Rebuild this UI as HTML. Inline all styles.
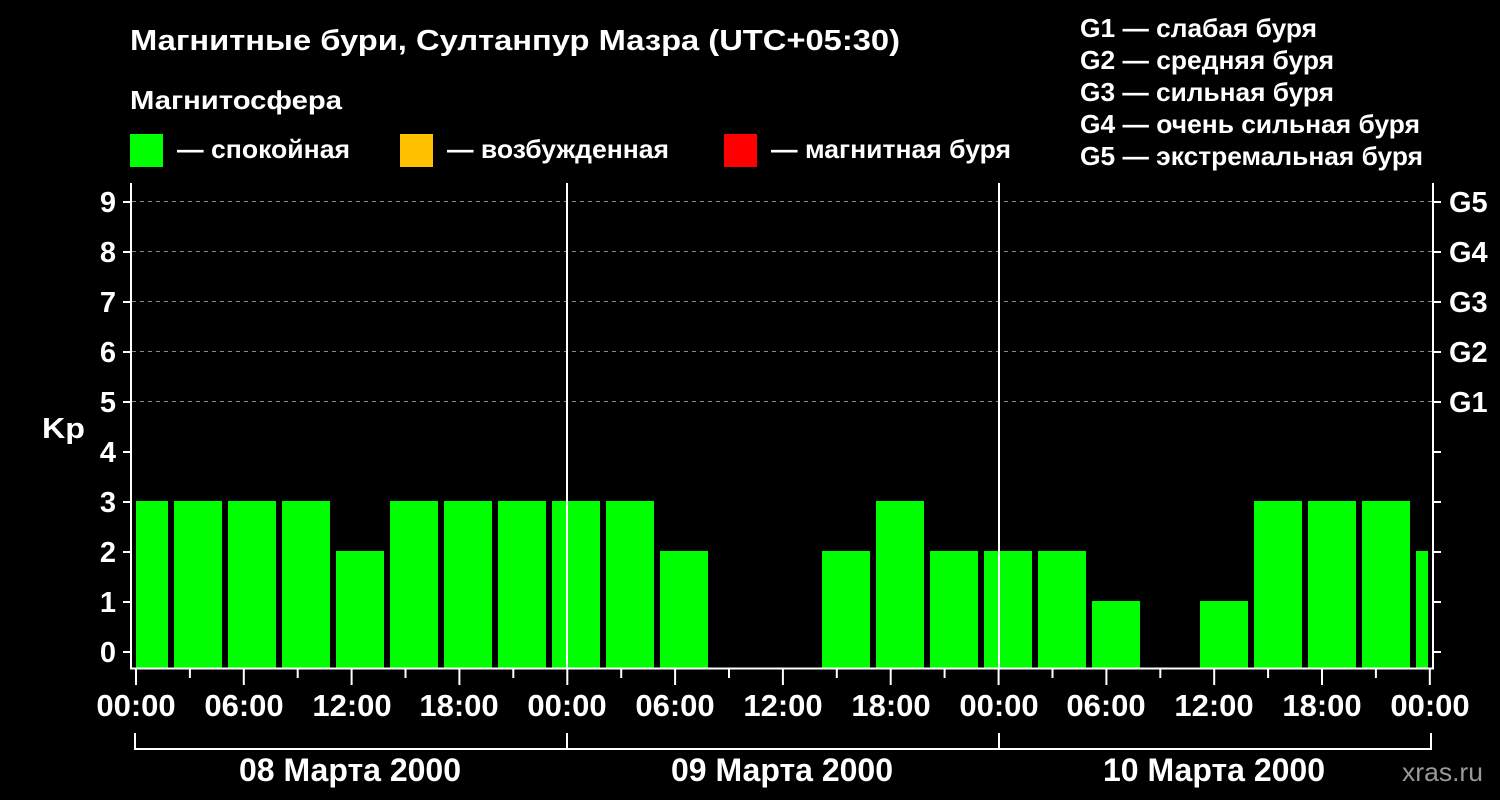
<!DOCTYPE html>
<html><head><meta charset="utf-8"><style>
body{margin:0;background:#000;width:1500px;height:800px;overflow:hidden}
svg{display:block}
text{font-family:"Liberation Sans",sans-serif;font-weight:bold;fill:#fff}
</style></head><body>
<svg width="1500" height="800" xmlns="http://www.w3.org/2000/svg">
<text x="130" y="50" font-size="29" textLength="770" lengthAdjust="spacingAndGlyphs">Магнитные бури, Султанпур Мазра (UTC+05:30)</text>
<text x="130" y="109" font-size="26" textLength="212" lengthAdjust="spacingAndGlyphs">Магнитосфера</text>
<rect x="130" y="134" width="33" height="33" fill="#00ff00"/>
<text x="177" y="158" font-size="26" textLength="173" lengthAdjust="spacingAndGlyphs">— спокойная</text>
<rect x="400" y="134" width="33" height="33" fill="#ffc000"/>
<text x="447" y="158" font-size="26" textLength="222" lengthAdjust="spacingAndGlyphs">— возбужденная</text>
<rect x="724" y="134" width="33" height="33" fill="#ff0000"/>
<text x="771" y="158" font-size="26" textLength="240" lengthAdjust="spacingAndGlyphs">— магнитная буря</text>
<g font-size="26">
<text x="1080" y="37" textLength="237" lengthAdjust="spacingAndGlyphs">G1 — слабая буря</text>
<text x="1080" y="69" textLength="254" lengthAdjust="spacingAndGlyphs">G2 — средняя буря</text>
<text x="1080" y="101" textLength="254" lengthAdjust="spacingAndGlyphs">G3 — сильная буря</text>
<text x="1080" y="133" textLength="340" lengthAdjust="spacingAndGlyphs">G4 — очень сильная буря</text>
<text x="1080" y="165" textLength="343" lengthAdjust="spacingAndGlyphs">G5 — экстремальная буря</text>
</g>
<g stroke="#888" stroke-dasharray="4,4" stroke-width="1">
<line x1="132" x2="1432" y1="201.5" y2="201.5"/><line x1="132" x2="1432" y1="251.5" y2="251.5"/>
<line x1="132" x2="1432" y1="301.5" y2="301.5"/><line x1="132" x2="1432" y1="351.5" y2="351.5"/>
<line x1="132" x2="1432" y1="401.5" y2="401.5"/>
</g>
<g fill="#00ff00">
<rect x="136" y="501" width="32" height="167"/>
<rect x="174" y="501" width="48" height="167"/>
<rect x="228" y="501" width="48" height="167"/>
<rect x="282" y="501" width="48" height="167"/>
<rect x="336" y="551" width="48" height="117"/>
<rect x="390" y="501" width="48" height="167"/>
<rect x="444" y="501" width="48" height="167"/>
<rect x="498" y="501" width="48" height="167"/>
<rect x="552" y="501" width="48" height="167"/>
<rect x="606" y="501" width="48" height="167"/>
<rect x="660" y="551" width="48" height="117"/>
<rect x="822" y="551" width="48" height="117"/>
<rect x="876" y="501" width="48" height="167"/>
<rect x="930" y="551" width="48" height="117"/>
<rect x="984" y="551" width="48" height="117"/>
<rect x="1038" y="551" width="48" height="117"/>
<rect x="1092" y="601" width="48" height="67"/>
<rect x="1200" y="601" width="48" height="67"/>
<rect x="1254" y="501" width="48" height="167"/>
<rect x="1308" y="501" width="48" height="167"/>
<rect x="1362" y="501" width="48" height="167"/>
<rect x="1416" y="551" width="12" height="117"/>
</g>
<g stroke="#fff" stroke-width="2" fill="none">
<polyline points="131,183 131,668.5 1433,668.5 1433,183"/>
<line x1="567" x2="567" y1="183" y2="668"/>
<line x1="999" x2="999" y1="183" y2="668"/>
<polyline points="135,733 135,749 1431,749 1431,733"/>
<line x1="567" x2="567" y1="733" y2="749"/><line x1="999" x2="999" y1="733" y2="749"/>
</g>
<g stroke="#fff" stroke-width="2">
<line x1="123" x2="131" y1="652" y2="652"/><line x1="123" x2="131" y1="602" y2="602"/>
<line x1="123" x2="131" y1="552" y2="552"/><line x1="123" x2="131" y1="502" y2="502"/>
<line x1="123" x2="131" y1="452" y2="452"/><line x1="123" x2="131" y1="402" y2="402"/>
<line x1="123" x2="131" y1="352" y2="352"/><line x1="123" x2="131" y1="302" y2="302"/>
<line x1="123" x2="131" y1="252" y2="252"/><line x1="123" x2="131" y1="202" y2="202"/>
<line x1="1433" x2="1441" y1="652" y2="652"/><line x1="1433" x2="1441" y1="602" y2="602"/>
<line x1="1433" x2="1441" y1="552" y2="552"/><line x1="1433" x2="1441" y1="502" y2="502"/>
<line x1="1433" x2="1441" y1="452" y2="452"/><line x1="1433" x2="1441" y1="402" y2="402"/>
<line x1="1433" x2="1441" y1="352" y2="352"/><line x1="1433" x2="1441" y1="302" y2="302"/>
<line x1="1433" x2="1441" y1="252" y2="252"/><line x1="1433" x2="1441" y1="202" y2="202"/>
</g>
<g font-size="29" text-anchor="end">
<text x="116" y="662">0</text><text x="116" y="612">1</text><text x="116" y="562">2</text>
<text x="116" y="512">3</text><text x="116" y="462">4</text><text x="116" y="412">5</text>
<text x="116" y="362">6</text><text x="116" y="312">7</text><text x="116" y="262">8</text>
<text x="116" y="212">9</text>
</g>
<text x="42" y="438" font-size="29" textLength="43" lengthAdjust="spacingAndGlyphs">Kp</text>
<g font-size="29">
<text x="1449" y="412">G1</text><text x="1449" y="362">G2</text><text x="1449" y="312">G3</text>
<text x="1449" y="262">G4</text><text x="1449" y="212">G5</text>
</g>
<g stroke="#fff" stroke-width="2">
<line x1="136" x2="136" y1="669" y2="685"/><line x1="189.9" x2="189.9" y1="669" y2="678"/>
<line x1="243.8" x2="243.8" y1="669" y2="685"/><line x1="297.7" x2="297.7" y1="669" y2="678"/>
<line x1="351.6" x2="351.6" y1="669" y2="685"/><line x1="405.5" x2="405.5" y1="669" y2="678"/>
<line x1="459.4" x2="459.4" y1="669" y2="685"/><line x1="513.3" x2="513.3" y1="669" y2="678"/>
<line x1="567.3" x2="567.3" y1="669" y2="685"/><line x1="621.2" x2="621.2" y1="669" y2="678"/>
<line x1="675.1" x2="675.1" y1="669" y2="685"/><line x1="729" x2="729" y1="669" y2="678"/>
<line x1="782.9" x2="782.9" y1="669" y2="685"/><line x1="836.8" x2="836.8" y1="669" y2="678"/>
<line x1="890.7" x2="890.7" y1="669" y2="685"/><line x1="944.6" x2="944.6" y1="669" y2="678"/>
<line x1="998.6" x2="998.6" y1="669" y2="685"/><line x1="1052.5" x2="1052.5" y1="669" y2="678"/>
<line x1="1106.4" x2="1106.4" y1="669" y2="685"/><line x1="1160.3" x2="1160.3" y1="669" y2="678"/>
<line x1="1214.2" x2="1214.2" y1="669" y2="685"/><line x1="1268.1" x2="1268.1" y1="669" y2="678"/>
<line x1="1322" x2="1322" y1="669" y2="685"/><line x1="1375.9" x2="1375.9" y1="669" y2="678"/>
<line x1="1429.8" x2="1429.8" y1="669" y2="685"/>
</g>
<g font-size="31" text-anchor="middle">
<text x="136" y="716">00:00</text><text x="244" y="716">06:00</text><text x="352" y="716">12:00</text>
<text x="459" y="716">18:00</text><text x="567" y="716">00:00</text><text x="675" y="716">06:00</text>
<text x="783" y="716">12:00</text><text x="891" y="716">18:00</text><text x="999" y="716">00:00</text>
<text x="1106" y="716">06:00</text><text x="1214" y="716">12:00</text><text x="1322" y="716">18:00</text>
<text x="1430" y="716">00:00</text>
<text x="350" y="781" font-size="32">08 Марта 2000</text>
<text x="782" y="781" font-size="32">09 Марта 2000</text>
<text x="1214" y="781" font-size="32">10 Марта 2000</text>
</g>
<text x="1402" y="781" font-size="26" style="fill:#999;font-weight:normal" textLength="81" lengthAdjust="spacingAndGlyphs">xras.ru</text>
</svg>
</body></html>
